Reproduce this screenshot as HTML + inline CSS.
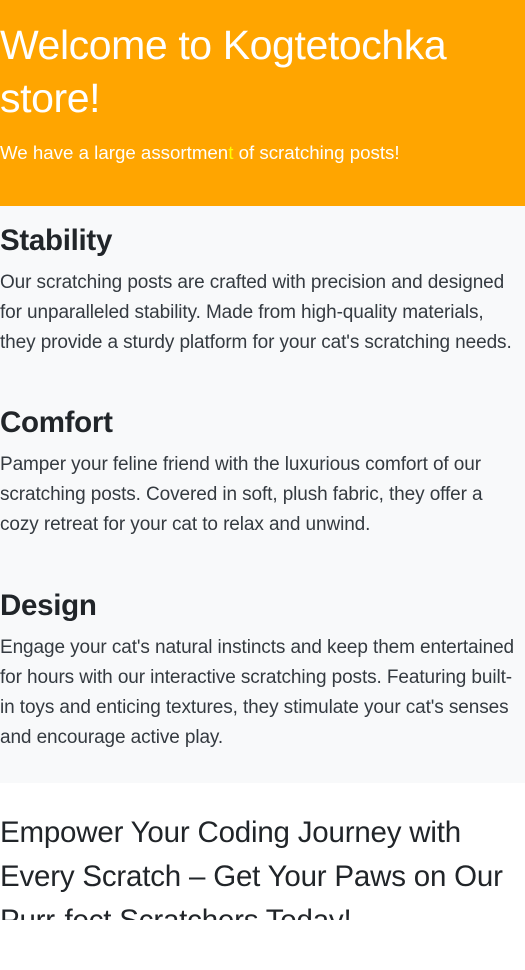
<!DOCTYPE html>
<html><head><meta charset="utf-8"><style>
body{margin:0;width:525px;height:970px;overflow:hidden;background:#fff;font-family:"Liberation Sans",sans-serif;color:#212529}
.hdr{background:#ffa500;height:206px;color:#fff;position:relative}
.hdr h1{margin:0;position:absolute;top:19px;left:0;font-weight:normal;font-size:41px;line-height:53px;letter-spacing:-0.4px}
.hdr p{margin:0;position:absolute;top:141px;left:0;font-size:18.7px;line-height:24px}
.feat{background:#f8f9fa;height:577px;position:relative}
.s{position:absolute;left:0}
.s h2{margin:0;font-size:29.5px;line-height:36px;font-weight:bold;letter-spacing:-0.3px}
.s p{margin:9px 0 0;font-size:19px;line-height:30px;color:#343a40;white-space:nowrap;letter-spacing:-0.1px}
.cta{position:absolute;top:811px;left:0;height:109px;overflow:hidden;font-size:29.5px;line-height:44px;white-space:nowrap;letter-spacing:-0.2px}
</style></head><body>
<div class="hdr"><h1>Welcome to Kogtetochka<br>store!</h1><p>We have a large assortmen<span style="color:#ff0">t</span> of scratching posts!</p></div>
<div class="feat">
<div class="s" style="top:17px"><h2>Stability</h2><p>Our scratching posts are crafted with precision and designed<br>for unparalleled stability. Made from high-quality materials,<br>they provide a sturdy platform for your cat's scratching needs.</p></div>
<div class="s" style="top:199px"><h2>Comfort</h2><p>Pamper your feline friend with the luxurious comfort of our<br>scratching posts. Covered in soft, plush fabric, they offer a<br>cozy retreat for your cat to relax and unwind.</p></div>
<div class="s" style="top:382px"><h2>Design</h2><p>Engage your cat's natural instincts and keep them entertained<br>for hours with our interactive scratching posts. Featuring built-<br>in toys and enticing textures, they stimulate your cat's senses<br>and encourage active play.</p></div>
</div>
<div class="cta">Empower Your Coding Journey with<br>Every Scratch – Get Your Paws on Our<br>Purr-fect Scratchers Today!</div>
</body></html>
